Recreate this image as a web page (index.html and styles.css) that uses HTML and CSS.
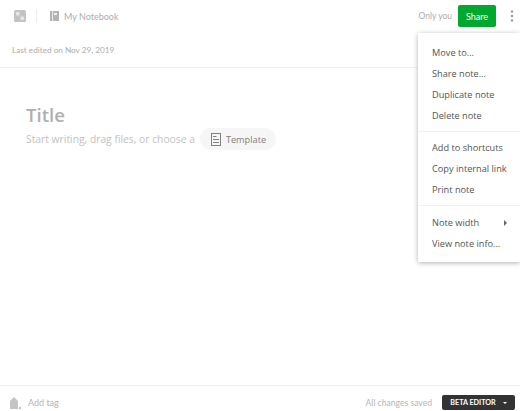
FILE: index.html
```html
<!DOCTYPE html>
<html lang="en">
<head>
<meta charset="utf-8">
<title>My Notebook</title>
<link rel="stylesheet" href="styles.css">
</head>
<body>
<div class="app">
  <header class="topbar">
    <svg class="note-icon" width="14" height="14" viewBox="0 0 14 14"><rect width="12" height="12" x="1" y="1" rx="1.5" fill="#c4c4c4"/><path d="M3 3h3.500v3.500H3zM7.500 7.500H11V11H7.500z" fill="#e6e6e6"/></svg>
    <span class="divider"></span>
    <svg class="book-icon" width="9" height="10" viewBox="0 0 9 10"><path d="M0 0h9v10H0z" fill="#b5b5b5"/><path d="M2 0h1v10H2z" fill="#e8e8e8"/><path d="M4 2h3v2H4z" fill="#f2f2f2"/></svg>
    <span class="notebook">My Notebook</span>
    <span class="spacer"></span>
    <span class="only">Only you</span>
    <button class="share">Share</button>
    <svg class="kebab" width="4" height="12" viewBox="0 0 4 12"><circle cx="2" cy="1.500" r="1.200"/><circle cx="2" cy="6" r="1.200"/><circle cx="2" cy="10.500" r="1.200"/></svg>
  </header>
  <div class="meta">Last edited on Nov 29, 2019</div>
  <main class="editor">
    <h1 class="title">Title</h1>
    <div class="prompt">
      <span>Start writing, drag files, or choose a</span>
      <span class="template">
        <svg width="10" height="13" viewBox="0 0 10 13"><rect x=".5" y=".5" width="9" height="12" fill="none" stroke="#808080"/><path d="M2 3.500h3.500M2 6.500h6M2 9.500h6" stroke="#808080" fill="none"/></svg>
        Template
      </span>
    </div>
  </main>
  <footer class="footer">
    <svg width="13" height="14" viewBox="0 0 13 14"><path d="M1 13V5l4-4 4 4v8z" fill="#c4c4c4"/><circle cx="11" cy="12" r="1.200" fill="#c4c4c4"/></svg>
    <span class="tag">Add tag</span>
    <span class="spacer"></span>
    <span class="saved">All changes saved</span>
    <span class="beta">BETA EDITOR <i class="caret"></i></span>
  </footer>
  <nav class="menu">
    <div class="group">
      <div class="item">Move to...</div>
      <div class="item">Share note...</div>
      <div class="item">Duplicate note</div>
      <div class="item">Delete note</div>
    </div>
    <div class="group">
      <div class="item">Add to shortcuts</div>
      <div class="item">Copy internal link</div>
      <div class="item">Print note</div>
    </div>
    <div class="group">
      <div class="item">Note width <i class="arrow"></i></div>
      <div class="item">View note info...</div>
    </div>
  </nav>
</div>
</body>
</html>
```

FILE: styles.css
```css
* { box-sizing: border-box; }
html, body { margin: 0; height: 100%; }
body { background: #fff; overflow: hidden; }
.app {
  position: relative;
  width: 520px;
  height: 411px;
  display: flex;
  flex-direction: column;
  font-family: "Lato", "Liberation Sans", sans-serif;
}
.topbar {
  height: 33px;
  display: flex;
  align-items: center;
  padding: 0 6px 1px 13px;
  flex: none;
}
.note-icon { flex: none; }
.divider { width: 1px; height: 14px; background: #ededed; margin: 0 13px 0 9px; }
.book-icon { flex: none; margin-right: 5px; }
.notebook { font-size: 9px; color: #adadad; }
.spacer { flex: 1; }
.only { font-size: 8.500px; color: #adadad; margin-right: 6px; }
.share {
  width: 38px;
  height: 22px;
  border: 0;
  border-radius: 2px;
  padding: 0;
  background: #00a82d;
  color: #fff;
  font: 9px "Lato", "Liberation Sans", sans-serif;
  margin-right: 14px;
}
.kebab { fill: #999; flex: none; }
.meta {
  height: 35px;
  flex: none;
  padding: 11px 0 0 12px;
  font-size: 8.200px;
  line-height: 12px;
  color: #adadad;
  border-bottom: 1px solid #f0f0f0;
}
.editor {
  flex: 1;
  padding: 33px 26px 0;
  font-family: "Open Sans", "Noto Sans", sans-serif;
}
.title {
  margin: 0;
  font-size: 18.600px;
  line-height: 27px;
  font-weight: 600;
  color: #b0b0b0;
}
.prompt {
  display: flex;
  align-items: center;
  gap: 5px;
  font-size: 10.300px;
  color: #c2c2c2;
}
.template {
  display: flex;
  align-items: center;
  gap: 5px;
  height: 22px;
  padding: 0 10px 0 11px;
  border-radius: 11px;
  background: #f6f6f6;
  color: #808080;
  font-size: 9.200px;
}
.footer {
  height: 26px;
  flex: none;
  border-top: 1px solid #f2f2f2;
  display: flex;
  align-items: center;
  padding: 8px 5px 0 9px;
}
.tag { font-size: 9px; color: #b5b5b5; margin-left: 6px; }
.saved { font-size: 8.600px; color: #b5b5b5; margin-right: 10px; }
.beta {
  width: 73px;
  height: 15px;
  border-radius: 2px;
  background: #333;
  color: #fff;
  font-size: 7.200px;
  font-weight: 700;
  display: flex;
  align-items: center;
  justify-content: center;
  gap: 7px;
}
.caret {
  border-left: 2px solid transparent;
  border-right: 2px solid transparent;
  border-top: 2px solid #fff;
}
.menu {
  position: absolute;
  left: 418px;
  top: 33px;
  width: 102px;
  background: #fff;
  box-shadow: 0 1px 5px rgba(0,0,0,.3);
  font-family: "Open Sans", "Noto Sans", sans-serif;
  font-size: 9.200px;
  font-weight: 500;
  color: #555;
}
.group { padding: 5px 0; border-bottom: 1px solid #f0f0f0; }
.group:first-child { padding-top: 9px; }
.group:last-child { padding: 6px 0 8px; border-bottom: 0; }
.item {
  height: 21px;
  line-height: 21px;
  padding-left: 14px;
  position: relative;
  white-space: nowrap;
}
.arrow {
  position: absolute;
  left: 86px;
  top: 8px;
  border-top: 3px solid transparent;
  border-bottom: 3px solid transparent;
  border-left: 3px solid #666;
}
```
